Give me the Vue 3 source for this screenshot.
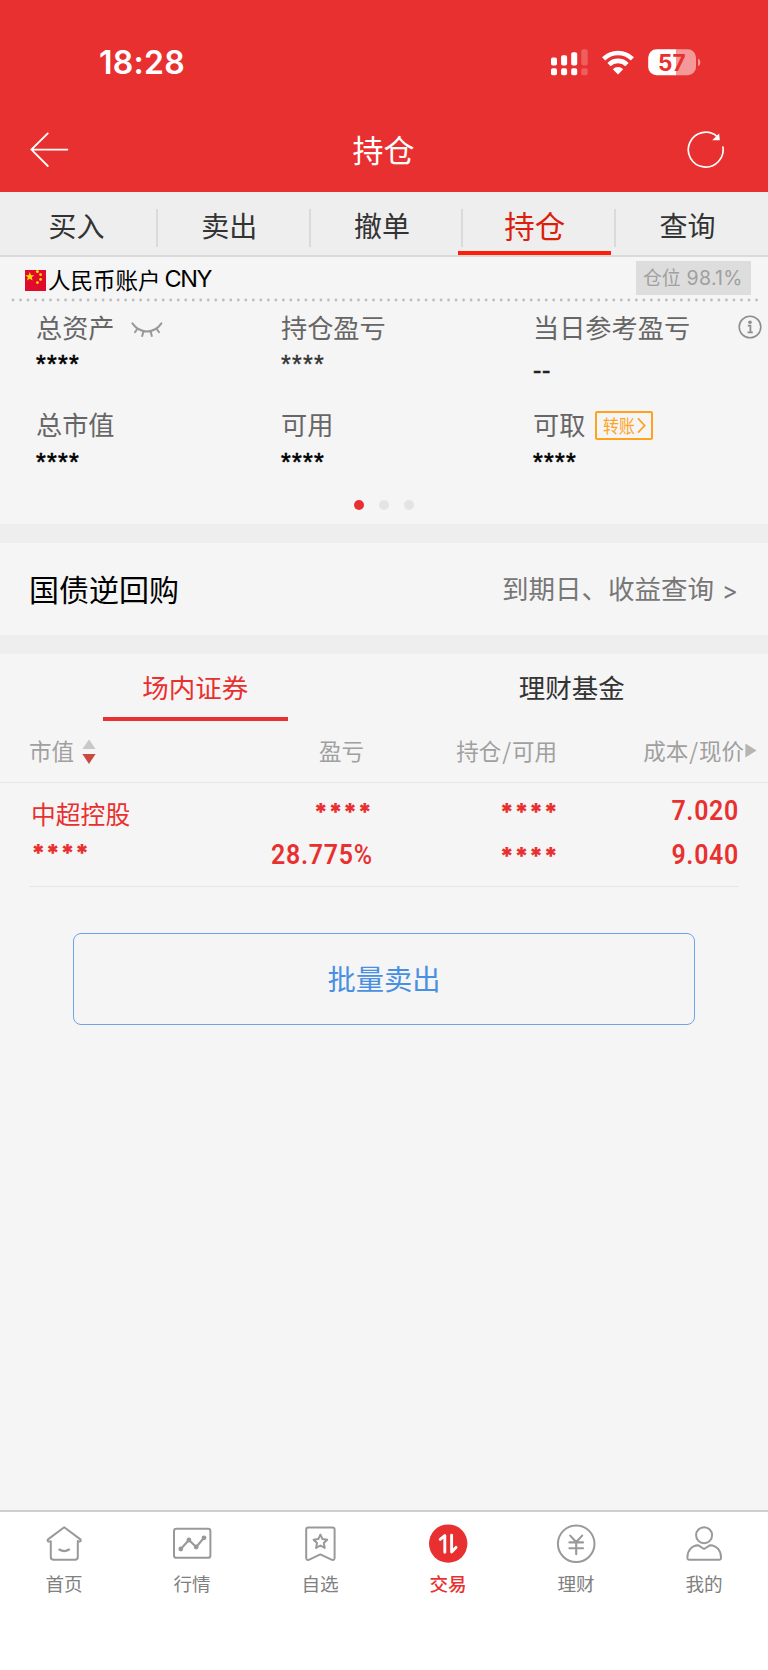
<template>
  <div class="page">
    <header class="header">
      <div class="status-bar">
        <span class="status-time">18:28</span>
        <div class="status-icons">
          <svg class="signal" width="38" height="28" viewBox="0 0 38 28">
            <g fill="#fff">
              <rect x="0" y="8.5" width="6" height="8" rx="1.8" />
              <rect x="10.1" y="6.2" width="6" height="10.3" rx="1.8" />
              <rect x="20.2" y="3.2" width="6" height="13.3" rx="1.8" />
              <rect x="0" y="19.2" width="6" height="7" rx="1.8" />
              <rect x="10.1" y="19.2" width="6" height="7" rx="1.8" />
              <rect x="20.2" y="19.2" width="6" height="7" rx="1.8" />
            </g>
            <g fill="#fff" opacity="0.22">
              <rect x="30.3" y="0.2" width="6.4" height="16.3" rx="1.8" />
              <rect x="30.3" y="19.2" width="6.4" height="7" rx="1.8" />
            </g>
          </svg>
          <svg class="wifi" width="32" height="25" viewBox="0 0 32 25">
            <g fill="none" stroke="#fff" stroke-width="4.6">
              <path d="M1.6 8.8A20.6 20.6 0 0 1 30.4 8.8" />
              <path d="M7 14.6A12.8 12.8 0 0 1 25 14.6" />
            </g>
            <path d="M16 24.4L10.8 19.2a7.4 7.4 0 0 1 10.4 0Z" fill="#fff" />
          </svg>
          <svg class="battery" width="53" height="27" viewBox="0 0 53 27">
            <path d="M8.5 0.3H28V26.3H8.5A8.3 8.3 0 0 1 0.2 18V8.6A8.3 8.3 0 0 1 8.5 0.3Z" fill="#fff" />
            <path d="M28 0.3H39.7A8.3 8.3 0 0 1 48 8.6V18A8.3 8.3 0 0 1 39.7 26.3H28Z" fill="#fff" opacity="0.5" />
            <path d="M50 9.6Q52.4 10.6 52.4 13.4T50 17.2Z" fill="#fff" opacity="0.5" />
            <text x="23.8" y="21.6" class="battery-num">57</text>
          </svg>
        </div>
      </div>
      <div class="nav-bar">
        <svg class="back" width="40" height="36" viewBox="0 0 40 36" fill="none" stroke="#fff" stroke-width="1.8" stroke-linecap="round">
          <path d="M38.4 17.6H2.8M18.8 1.4L2.4 17.6L18.8 34" />
        </svg>
        <h1 class="nav-title">持仓</h1>
        <svg class="refresh" width="38" height="38" viewBox="0 0 38 38">
          <path d="M35.8 15.4A17.4 17.4 0 1 1 30.2 5.6" fill="none" stroke="#fff" stroke-width="1.7" />
          <path d="M32.1 2.4L32.8 9.3H25.2Z" fill="#fff" />
        </svg>
      </div>
    </header>

    <nav class="trade-tabs">
      <div
        v-for="tab in tradeTabs"
        :key="tab"
        class="trade-tab"
        :class="{ active: activeTrade === tab }"
        @click="activeTrade = tab"
      >
        {{ tab }}
      </div>
    </nav>

    <section class="account">
      <div class="account-head">
        <svg class="flag" width="21" height="21" viewBox="0 0 21 21">
          <rect width="21" height="21" fill="#df0a2c" />
          <g fill="#ffde00">
            <path d="M4.8 2L6 5.2L9.3 5.3L6.7 7.3L7.6 10.5L4.8 8.7L2 10.5L2.9 7.3L0.3 5.3L3.6 5.2Z" />
            <circle cx="12.4" cy="1.6" r="1.5" />
            <circle cx="15.6" cy="4.6" r="1.4" />
            <circle cx="15.6" cy="9.4" r="1.4" />
            <circle cx="12.4" cy="12.6" r="1.4" />
          </g>
        </svg>
        <span class="account-name">人民币账户</span>
        <span class="account-cur">CNY</span>
        <span class="position-badge">仓位<em>98.1%</em></span>
      </div>
      <svg class="dotted" width="750" height="4" viewBox="0 0 750 4">
        <path d="M2 2H750" stroke="#bdbdbd" stroke-width="2.8" stroke-linecap="round" stroke-dasharray="0.01 7.5" />
      </svg>

      <div class="asset-grid">
        <div v-for="item in assets" :key="item.label" class="asset">
          <div class="asset-label">
            <span>{{ item.label }}</span>
            <svg v-if="item.extra === 'eye'" class="eye" width="32" height="18" viewBox="0 0 32 18" fill="none" stroke="#999" stroke-width="2" stroke-linecap="round">
              <path d="M1.4 2.4Q7 10.4 16 10.4T30.4 2.4M6.2 8L4 11.2M12.4 10.6L11.2 15M19.6 10.6L20.8 15M25.8 8L28 11.2" />
            </svg>
            <span v-if="item.extra === 'transfer'" class="transfer">
              <span class="transfer-text">转账</span>
              <svg width="9" height="17" viewBox="0 0 9 17" fill="none" stroke="#ffa31f" stroke-width="1.8">
                <path d="M1 1.4L7.6 8.5L1 15.6" />
              </svg>
            </span>
            <svg v-if="item.extra === 'info'" class="info" width="24" height="24" viewBox="0 0 24 24">
              <circle cx="12" cy="12" r="10.8" fill="none" stroke="#8e8e8e" stroke-width="1.6" />
              <circle cx="12" cy="7.2" r="1.8" fill="#8e8e8e" />
              <path d="M9.8 10.6H12.4V17M9.6 17.4H14.8" fill="none" stroke="#8e8e8e" stroke-width="1.8" />
            </svg>
          </div>
          <div class="asset-value" :class="item.tone">{{ item.value }}</div>
        </div>
      </div>

      <div class="pager">
        <i v-for="n in 3" :key="n" :class="{ on: n === 1 }"></i>
      </div>
    </section>

    <section class="repo">
      <span class="repo-title">国债逆回购</span>
      <span class="repo-link">到期日、收益查询<em>&gt;</em></span>
    </section>

    <section class="holdings">
      <div class="kind-tabs">
        <div
          v-for="kind in kinds"
          :key="kind"
          class="kind-tab"
          :class="{ active: activeKind === kind }"
          @click="activeKind = kind"
        >
          <span>{{ kind }}</span>
        </div>
      </div>

      <div class="table-head">
        <div class="th-first">
          <span>市值</span>
          <svg width="14" height="26" viewBox="0 0 14 26">
            <path d="M7 0.5L13.6 10H0.4Z" fill="#c8c8c8" />
            <path d="M7 25L13.6 15H0.4Z" fill="#c94b3f" />
          </svg>
        </div>
        <div class="th-profit">盈亏</div>
        <div class="th-hold">持仓<em>/</em>可用</div>
        <div class="th-price">成本<em>/</em>现价</div>
        <svg class="more" width="12" height="15" viewBox="0 0 12 15">
          <path d="M0.4 0.4L11.6 7.5L0.4 14.6Z" fill="#b8b4b0" />
        </svg>
      </div>

      <div v-for="row in rows" :key="row.name" class="table-row">
        <div class="cell cell-name">
          <div class="stock-name">{{ row.name }}</div>
          <div class="stars">{{ row.marketValue }}</div>
        </div>
        <div class="cell cell-profit">
          <div class="stars">{{ row.profit }}</div>
          <div class="num">{{ row.rate }}<em>%</em></div>
        </div>
        <div class="cell cell-hold">
          <div class="stars">{{ row.hold }}</div>
          <div class="stars">{{ row.usable }}</div>
        </div>
        <div class="cell cell-price">
          <div class="num">{{ row.cost }}</div>
          <div class="num">{{ row.price }}</div>
        </div>
      </div>

      <button class="batch-sell">批量卖出</button>
    </section>

    <footer class="tab-bar">
      <div class="bar-item">
        <svg width="40" height="40" viewBox="0 0 40 40" class="line-icon">
          <path d="M6.8 19.4V33Q6.8 35.8 9.6 35.8H31Q33.8 35.8 33.8 33V17M6.6 17.4H4.2Q3 16.6 4 15.4L20.2 3.2L36.4 15.4Q37.4 16.8 36 17.4H33.8M6.8 17.2V21" />
          <path d="M15.4 25.6Q20.2 28.6 25 25.6" stroke-width="2.3" />
        </svg>
        <span>首页</span>
      </div>
      <div class="bar-item">
        <svg width="40" height="40" viewBox="0 0 40 40" class="line-icon">
          <rect x="2" y="4.8" width="36.4" height="29" rx="2.4" />
          <path d="M8.8 25L16.9 16L24.2 23L32 13.8" stroke-width="2.1" />
          <g fill="#999" stroke="none">
            <circle cx="8.8" cy="25" r="2.4" />
            <circle cx="16.9" cy="16" r="2.4" />
            <circle cx="24.2" cy="23" r="2.4" />
            <circle cx="32" cy="13.8" r="2.4" />
          </g>
        </svg>
        <span>行情</span>
      </div>
      <div class="bar-item">
        <svg width="40" height="40" viewBox="0 0 40 40" class="line-icon">
          <path d="M8.4 3.4H32.4Q34.6 3.4 34.6 5.6V34Q34.4 36.6 32 35.8L20.3 30.4L8.8 35.8Q6.4 36.6 6.2 34V5.6Q6.2 3.4 8.4 3.4Z" />
          <path d="M20.4 10.6L22.5 15.1L27.2 15.7L23.8 19L24.7 23.9L20.4 21.5L16.1 23.9L17 19L13.6 15.7L18.3 15.1Z" />
        </svg>
        <span>自选</span>
      </div>
      <div class="bar-item active">
        <svg width="40" height="40" viewBox="0 0 40 40">
          <circle cx="20.2" cy="19.6" r="19.2" fill="#e93030" />
          <path d="M12.2 15.4L16.8 11.6V28.2M23.6 11.2V28L28 23.4" fill="none" stroke="#fff" stroke-width="2.9" stroke-linecap="round" stroke-linejoin="round" />
        </svg>
        <span>交易</span>
      </div>
      <div class="bar-item">
        <svg width="40" height="40" viewBox="0 0 40 40" class="line-icon">
          <circle cx="20.2" cy="19.8" r="18.3" />
          <path d="M14.2 11.6L20.2 18L26.2 11.6M13.4 18.4H27M13.4 24.2H27M20.2 18V30.2" stroke-width="2.1" />
        </svg>
        <span>理财</span>
      </div>
      <div class="bar-item">
        <svg width="40" height="40" viewBox="0 0 40 40" class="line-icon">
          <circle cx="20.1" cy="11.2" r="8" />
          <path d="M14 21.2L20.1 25L26.2 21.2C33 21.6 37 26.6 37 33.4Q37.2 35.8 35 35.8H5.4Q3.2 35.8 3.4 33.4C3.6 26.6 7.4 21.6 14 21.2Z" />
        </svg>
        <span>我的</span>
      </div>
    </footer>
  </div>
</template>

<script setup>
import { ref } from 'vue'

const tradeTabs = ['买入', '卖出', '撤单', '持仓', '查询']
const activeTrade = ref('持仓')

const kinds = ['场内证券', '理财基金']
const activeKind = ref('场内证券')

const assets = [
  { label: '总资产', value: '****', extra: 'eye' },
  { label: '持仓盈亏', value: '****', tone: 'soft' },
  { label: '当日参考盈亏', value: '--', tone: 'dash', extra: 'info' },
  { label: '总市值', value: '****' },
  { label: '可用', value: '****' },
  { label: '可取', value: '****', extra: 'transfer' },
]

const rows = [
  {
    name: '中超控股',
    marketValue: '****',
    profit: '****',
    rate: '28.775',
    hold: '****',
    usable: '****',
    cost: '7.020',
    price: '9.040',
  },
]
</script>

<style>
body {
  margin: 0;
  background: #f5f5f5;
}
</style>

<style scoped>
.page {
  display: flex;
  flex-direction: column;
  width: 768px;
  height: 1670px;
  overflow: hidden;
  background: #f5f5f5;
  font-family: 'Noto Sans CJK SC', sans-serif;
  color: #333;
}

.page * {
  box-sizing: border-box;
}

em {
  font-style: normal;
}

svg {
  display: block;
  flex-shrink: 0;
}

.header {
  height: 192px;
  flex-shrink: 0;
  background: #e93030;
  color: #fff;
}

.status-bar {
  display: flex;
  align-items: center;
  justify-content: space-between;
  height: 125px;
  padding: 0 67px 0 99px;
}

.status-time {
  font-family: Inter, sans-serif;
  font-size: 32px;
  font-weight: 600;
  letter-spacing: 0.3px;
}

.status-icons {
  display: flex;
  align-items: center;
}

.wifi {
  margin: 0 14px 0 13px;
}

.battery-num {
  font-family: Inter, sans-serif;
  font-size: 22.5px;
  font-weight: 700;
  fill: #e93030;
  text-anchor: middle;
}

.nav-bar {
  display: flex;
  align-items: center;
  justify-content: space-between;
  height: 50px;
  padding: 0 43px 0 29px;
}

.nav-title {
  margin: 0 0 2px 11px;
  font-size: 31px;
  line-height: 46px;
  font-weight: 400;
}

.trade-tabs {
  display: flex;
  height: 65px;
  padding-right: 4px;
  flex-shrink: 0;
  background: #eee;
  border-bottom: 2px solid #dadada;
}

.trade-tab {
  position: relative;
  display: flex;
  align-items: center;
  justify-content: center;
  flex: 1;
  padding-top: 2px;
  font-size: 28px;
  line-height: 40px;
}

.trade-tab:not(:last-child)::after {
  content: '';
  position: absolute;
  top: 17px;
  right: -5px;
  width: 2px;
  height: 38px;
  background: #dadada;
}

.trade-tab.active {
  padding-top: 7px;
  border-bottom: 4px solid #ff1e08;
  font-size: 30.5px;
  color: #dc1e0c;
}

.account {
  height: 267px;
  flex-shrink: 0;
}

.account-head {
  display: flex;
  align-items: center;
  height: 41px;
  padding: 2px 17px 0 25px;
  color: #000;
}

.flag {
  margin-top: 4px;
}

.account-name {
  margin-left: 2px;
  font-size: 22.5px;
  line-height: 34px;
}

.account-cur {
  margin: 0 0 0 4px;
  font-family: Inter, sans-serif;
  font-size: 23.5px;
  letter-spacing: -1.4px;
}

.position-badge {
  display: flex;
  align-items: center;
  width: 115px;
  height: 34px;
  margin: 0 0 2px auto;
  padding: 0 0 2px 7px;
  background: #ddd;
  color: #a0a0a0;
  font-size: 18.8px;
  white-space: nowrap;
}

.position-badge em {
  margin: 2px 0 0 6px;
  font-family: Inter, sans-serif;
  font-size: 19.5px;
  letter-spacing: 0.3px;
}

.dotted {
  margin: 0 0 0 11px;
}

.asset-grid {
  display: grid;
  grid-template-columns: 245px 252px 235px;
  grid-auto-rows: 97.5px;
  padding: 6px 0 0 36px;
}

.asset-label {
  display: flex;
  align-items: center;
  height: 37px;
  font-size: 26.2px;
  color: #666;
  white-space: nowrap;
}

.asset-value {
  height: 34px;
  padding-top: 2px;
  font-family: 'Liberation Sans', sans-serif;
  font-size: 25px;
  line-height: 34px;
  letter-spacing: 1.3px;
  color: #000;
  -webkit-text-stroke: 0.6px currentColor;
}

.asset-value.soft {
  color: #333;
  -webkit-text-stroke-width: 0.4px;
}

.asset-value.dash {
  padding-top: 8px;
  letter-spacing: 0.7px;
  color: #222;
}

.eye {
  margin: 6px 0 0 16px;
}

.info {
  margin: 1px 6px 0 auto;
}

.transfer {
  display: flex;
  align-items: center;
  width: 58px;
  height: 29px;
  margin: 2px 0 0 10px;
  padding-left: 6px;
  border: 2px solid #ffa31f;
  border-radius: 2px;
  color: #ffa31f;
}

/* the label is set condensed so it fits beside the chevron */
.transfer-text {
  width: 34px;
  padding-bottom: 1px;
  font-size: 18.5px;
  transform: scaleX(0.86);
  transform-origin: left center;
}

.pager {
  display: flex;
  justify-content: center;
  gap: 15px;
  margin-top: -3px;
}

.pager i {
  width: 10px;
  height: 10px;
  border-radius: 50%;
  background: #e4e4e4;
}

.pager i.on {
  background: #e93030;
}

.repo {
  display: flex;
  align-items: center;
  justify-content: space-between;
  height: 130px;
  padding: 0 30px 3px 29px;
  flex-shrink: 0;
  border-top: 19px solid #eee;
  border-bottom: 19px solid #eee;
}

.repo-title {
  font-size: 30px;
  color: #000;
}

.repo-link {
  font-size: 26.5px;
  color: #777;
}

.repo-link em {
  margin-left: 8px;
  font-family: Inter, sans-serif;
  font-size: 24px;
}

.holdings {
  flex: 1;
}

.kind-tabs {
  display: flex;
  height: 67px;
  padding: 0 8px 0 7px;
}

.kind-tab {
  flex: 1;
  display: flex;
  justify-content: center;
}

.kind-tab span {
  width: 185px;
  height: 67px;
  font-size: 26.5px;
  line-height: 66px;
  text-align: center;
}

.kind-tab.active span {
  color: #e93030;
  border-bottom: 4px solid #e93030;
}

.table-head {
  display: flex;
  align-items: center;
  height: 62px;
  padding: 0 11px 3px 29px;
  border-bottom: 1px solid #e6e6e6;
  font-size: 22.5px;
  color: #a0a0a0;
}

.table-head em {
  margin: 0 1px;
}

.th-first {
  display: flex;
  align-items: center;
  gap: 8px;
  width: 150px;
}

.th-first svg {
  margin-top: 3px;
}

.th-profit {
  width: 185px;
  text-align: right;
}

.th-hold {
  width: 193px;
  text-align: right;
}

.th-price {
  flex: 1;
  text-align: right;
}

.more {
  margin: 1px 0 0 1px;
}

.table-row {
  display: flex;
  height: 104px;
  margin: 0 29px;
  padding-top: 6px;
  border-bottom: 1px solid #e6e6e6;
  color: #e93030;
}

.cell {
  display: flex;
  flex-direction: column;
  text-align: right;
}

.cell > div {
  height: 44px;
  line-height: 44px;
}

.cell-name {
  width: 150px;
  padding-left: 2px;
  text-align: left;
}

.cell-profit {
  width: 193px;
}

.cell-hold {
  width: 186px;
}

.cell-price {
  flex: 1;
}

.stock-name {
  padding-top: 2px;
  font-size: 24.8px;
}

/* narrow upright figures */
.num {
  font-family: Roboto, sans-serif;
  font-size: 28px;
  font-weight: 600;
  letter-spacing: 0.8px;
  transform: scaleX(0.89);
  transform-origin: right center;
}

.num em {
  font-weight: 500;
  letter-spacing: 0;
}

.stars {
  padding-top: 2px;
  font-family: Inter, sans-serif;
  font-size: 24px;
  font-weight: 900;
}

.cell-name .stars {
  padding-top: 0;
  margin-top: -1px;
}

.batch-sell {
  display: block;
  width: 622px;
  height: 92px;
  margin: 46px 0 0 73px;
  padding: 0 0 3px;
  border: 1px solid #6ba4ea;
  border-radius: 8px;
  background: transparent;
  color: #4a90e2;
  font-family: inherit;
  font-size: 28.3px;
}

.tab-bar {
  display: flex;
  height: 160px;
  flex-shrink: 0;
  border-top: 2px solid #cecece;
  background: #fff;
}

.bar-item {
  display: flex;
  flex-direction: column;
  align-items: center;
  width: 128px;
  padding-top: 12px;
  font-size: 18.6px;
  color: #808080;
}

.bar-item span {
  margin-top: 5px;
  line-height: 28px;
}

.bar-item.active {
  color: #e93030;
  font-weight: 500;
}

.line-icon {
  fill: none;
  stroke: #999;
  stroke-width: 2;
  stroke-linecap: round;
  stroke-linejoin: round;
}
</style>
